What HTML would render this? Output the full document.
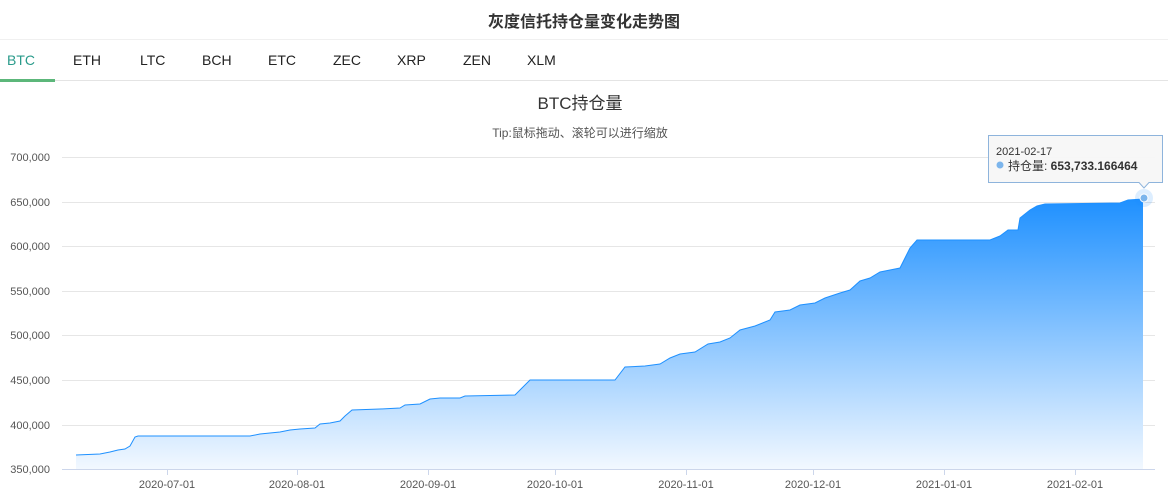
<!DOCTYPE html><html><head><meta charset="utf-8"><style>
body{margin:0;width:1168px;height:504px;background:#fff;font-family:"Liberation Sans","Noto Sans CJK SC",sans-serif;position:relative;overflow:hidden}
.t{position:absolute;top:8px;left:0;width:1168px;text-align:center;font-size:16px;font-weight:bold;color:#333}
.hl{position:absolute;top:39px;left:0;width:1168px;height:1px;background:#f0f0f0}
.tabs{position:absolute;top:52px;left:0;font-size:14px;color:#222}
.tabs span{position:absolute;white-space:nowrap}
.tl{position:absolute;top:80px;left:0;width:1168px;height:1px;background:#e4e4e4}
.ul{position:absolute;top:79px;left:0;width:55px;height:3px;background:#5cb77a}
</style></head><body>
<div class="t">灰度信托持仓量变化走势图</div>
<div class="hl"></div>
<div class="tabs">
<span style="left:7px;color:#2a9b8b">BTC</span><span style="left:73px">ETH</span><span style="left:140px">LTC</span><span style="left:202px">BCH</span><span style="left:268px">ETC</span><span style="left:333px">ZEC</span><span style="left:397px">XRP</span><span style="left:463px">ZEN</span><span style="left:527px">XLM</span>
</div>
<div class="tl"></div><div class="ul"></div>
<svg width="1168" height="504" style="position:absolute;left:0;top:0" font-family="Liberation Sans,Noto Sans CJK SC,sans-serif">
<defs><linearGradient id="g" x1="0" y1="199" x2="0" y2="469" gradientUnits="userSpaceOnUse"><stop offset="0" stop-color="#1e90ff"/><stop offset="1" stop-color="#f2f8ff"/></linearGradient></defs>
<text x="580" y="109" text-anchor="middle" font-size="17" fill="#333">BTC持仓量</text>
<text x="580" y="137" text-anchor="middle" font-size="12" fill="#555">Tip:鼠标拖动、滚轮可以进行缩放</text>
<g stroke="#e6e6e6" stroke-width="1">
<line x1="62" y1="157.5" x2="1155" y2="157.5"/><line x1="62" y1="202.5" x2="1155" y2="202.5"/><line x1="62" y1="246.5" x2="1155" y2="246.5"/><line x1="62" y1="291.5" x2="1155" y2="291.5"/><line x1="62" y1="335.5" x2="1155" y2="335.5"/><line x1="62" y1="380.5" x2="1155" y2="380.5"/><line x1="62" y1="425.5" x2="1155" y2="425.5"/></g>
<line x1="62" y1="469.5" x2="1155" y2="469.5" stroke="#ccd6eb"/>
<g stroke="#ccd6eb"><line x1="167.5" y1="469" x2="167.5" y2="475"/><line x1="297.5" y1="469" x2="297.5" y2="475"/><line x1="428.5" y1="469" x2="428.5" y2="475"/><line x1="555.5" y1="469" x2="555.5" y2="475"/><line x1="686.5" y1="469" x2="686.5" y2="475"/><line x1="813.5" y1="469" x2="813.5" y2="475"/><line x1="944.5" y1="469" x2="944.5" y2="475"/><line x1="1075.5" y1="469" x2="1075.5" y2="475"/></g>
<g font-size="11" fill="#555" text-anchor="end">
<text x="50" y="161">700,000</text><text x="50" y="206">650,000</text><text x="50" y="250">600,000</text><text x="50" y="295">550,000</text><text x="50" y="339">500,000</text><text x="50" y="384">450,000</text><text x="50" y="429">400,000</text><text x="50" y="473">350,000</text></g>
<g font-size="11" fill="#555" text-anchor="middle">
<text x="167" y="488">2020-07-01</text><text x="297" y="488">2020-08-01</text><text x="428" y="488">2020-09-01</text><text x="555" y="488">2020-10-01</text><text x="686" y="488">2020-11-01</text><text x="813" y="488">2020-12-01</text><text x="944" y="488">2021-01-01</text><text x="1075" y="488">2021-02-01</text></g>
<polygon fill="url(#g)" points="76,469 76,455 100,454 110,452 118,450 125,449 130,446 135,437 138,436 250,436 260,434 270,433 280,432 290,430 300,429 315,428 320,424 330,423 340,421 345,416 352,410 380,409 400,408 405,405 420,404 430,399 440,398 460,398 465,396 515,395 530,380 615,380 625,367 645,366 660,364 670,358 680,354 695,352 708,344 720,342 730,338 740,330 755,326 770,320 775,312 790,310 800,305 815,303 825,298 840,293 850,290 860,281 870,278 880,272 890,270 900,268 905,258 910,248 917,240 990,240 1000,236 1008,230 1018,230 1020,218 1025,214 1030,210 1037,206 1045,204 1120,203 1128,200 1143,199 1143,469"/>
<polyline fill="none" stroke="#1e90ff" stroke-width="1" points="76,455 100,454 110,452 118,450 125,449 130,446 135,437 138,436 250,436 260,434 270,433 280,432 290,430 300,429 315,428 320,424 330,423 340,421 345,416 352,410 380,409 400,408 405,405 420,404 430,399 440,398 460,398 465,396 515,395 530,380 615,380 625,367 645,366 660,364 670,358 680,354 695,352 708,344 720,342 730,338 740,330 755,326 770,320 775,312 790,310 800,305 815,303 825,298 840,293 850,290 860,281 870,278 880,272 890,270 900,268 905,258 910,248 917,240 990,240 1000,236 1008,230 1018,230 1020,218 1025,214 1030,210 1037,206 1045,204 1120,203 1128,200 1143,199"/>
<circle cx="1144" cy="198" r="9" fill="#1e90ff" opacity="0.15"/>
<circle cx="1144" cy="198" r="4" fill="#7cb5ec" stroke="#fff" stroke-width="1"/>
<path d="M988.5,135.5 H1162.5 V182.5 H1149 L1144,188 L1139,182.5 H988.5 Z" fill="#f7f7f7" fill-opacity="0.95" stroke="#8eb4dc"/>
<text x="996" y="155" font-size="11" fill="#333">2021-02-17</text>
<circle cx="1000" cy="165" r="3.5" fill="#7cb5ec"/>
<text x="1008" y="170" font-size="12" fill="#333">持仓量: <tspan font-weight="bold">653,733.166464</tspan></text>
</svg>
</body></html>
